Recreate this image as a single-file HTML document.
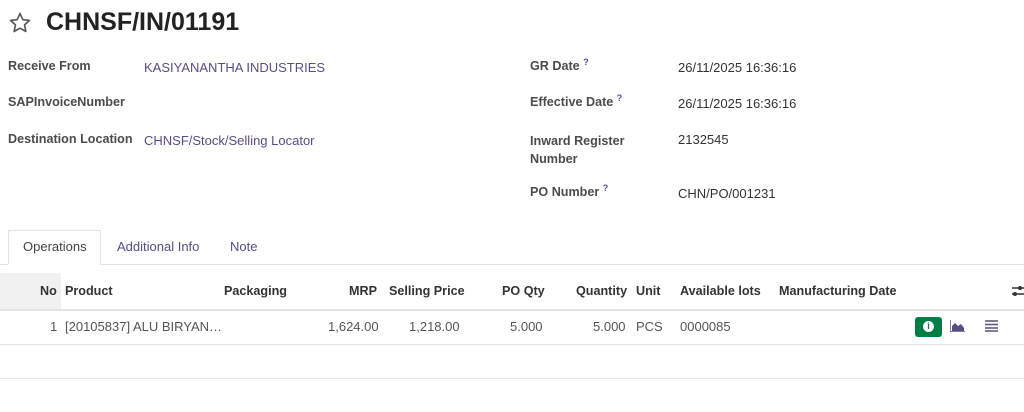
<!DOCTYPE html>
<html><head><style>
body{margin:0;width:1024px;height:412px;background:#fff;font-family:"Liberation Sans",sans-serif;font-size:13px;color:#444;position:relative;overflow:hidden}
.a{position:absolute;white-space:nowrap}
.lbl{font-weight:bold;color:#4c4c4c;font-size:12.6px}
.lnk{color:#5a4d84}
.v{color:#333}
sup{color:#5a4d84;font-size:9px;line-height:0}
.h{font-weight:bold;color:#333;top:284px;font-size:12.6px}
.c{color:#555;top:319px}
</style></head><body>
<svg class="a" style="left:8px;top:11px" width="24" height="24" viewBox="0 0 24 24"><path d="M12 2.5l2.9 6.2 6.6.7-5 4.5 1.4 6.6L12 17.2 6.1 20.5l1.4-6.6-5-4.5 6.6-.7z" fill="none" stroke="#555" stroke-width="1.6" stroke-linejoin="round"/></svg>
<div class="a" style="left:46px;top:8px;font-size:25px;font-weight:bold;color:#222">CHNSF/IN/01191</div>

<div class="a lbl" style="left:8px;top:59px">Receive From</div>
<div class="a lnk" style="left:144px;top:60px">KASIYANANTHA INDUSTRIES</div>
<div class="a lbl" style="left:8px;top:95px">SAPInvoiceNumber</div>
<div class="a lbl" style="left:8px;top:132px">Destination Location</div>
<div class="a lnk" style="left:144px;top:133px">CHNSF/Stock/Selling Locator</div>

<div class="a lbl" style="left:530px;top:59px">GR Date <sup>?</sup></div>
<div class="a v" style="left:678px;top:60px">26/11/2025 16:36:16</div>
<div class="a lbl" style="left:530px;top:95px">Effective Date <sup>?</sup></div>
<div class="a v" style="left:678px;top:96px">26/11/2025 16:36:16</div>
<div class="a lbl" style="left:530px;top:132px;line-height:18px">Inward Register<br>Number</div>
<div class="a v" style="left:678px;top:132px">2132545</div>
<div class="a lbl" style="left:530px;top:185px">PO Number <sup>?</sup></div>
<div class="a v" style="left:678px;top:186px">CHN/PO/001231</div>

<div class="a" style="left:0;top:264px;width:1024px;border-top:1px solid #dee2e6"></div>
<div class="a" style="left:8px;top:230px;width:93px;height:35px;border:1px solid #dee2e6;border-bottom:1px solid #fff;background:#fff;box-sizing:border-box"></div>
<div class="a" style="left:23px;top:239px;color:#444">Operations</div>
<div class="a lnk" style="left:117px;top:239px">Additional Info</div>
<div class="a lnk" style="left:230px;top:239px">Note</div>

<div class="a" style="left:0;top:273px;width:61px;height:36px;background:#f1f1f1"></div>
<div class="a" style="left:0;top:309px;width:1024px;border-top:2px solid #e2e4e7"></div>
<div class="a" style="left:0;top:344px;width:1024px;border-top:1px solid #e2e4e7"></div>
<div class="a" style="left:0;top:378px;width:1024px;border-top:1px solid #e2e4e7"></div>

<div class="a h" style="left:40px">No</div>
<div class="a h" style="left:65px">Product</div>
<div class="a h" style="left:224px">Packaging</div>
<div class="a h" style="left:349px">MRP</div>
<div class="a h" style="left:389px">Selling Price</div>
<div class="a h" style="left:502px">PO Qty</div>
<div class="a h" style="left:576px">Quantity</div>
<div class="a h" style="left:636px">Unit</div>
<div class="a h" style="left:680px">Available lots</div>
<div class="a h" style="left:779px">Manufacturing Date</div>
<svg class="a" style="left:1012px;top:284px" width="12" height="14" viewBox="0 0 12 14"><path d="M0 4h12M0 10h12" stroke="#333" stroke-width="1.5"/><circle cx="8" cy="4" r="2" fill="#333"/><circle cx="3" cy="10" r="2" fill="#333"/></svg>

<div class="a c" style="left:50px">1</div>
<div class="a c" style="left:65px">[20105837] ALU BIRYAN…</div>
<div class="a c" style="left:328px">1,624.00</div>
<div class="a c" style="left:409px">1,218.00</div>
<div class="a c" style="left:510px">5.000</div>
<div class="a c" style="left:593px">5.000</div>
<div class="a c" style="left:636px">PCS</div>
<div class="a c" style="left:680px">0000085</div>
<div class="a" style="left:915px;top:317px;width:27px;height:20px;background:#017e42;border-radius:3px"></div>
<div class="a" style="left:923px;top:321px;width:11px;height:11px;border-radius:50%;background:#fff;color:#017e42;font-size:9px;font-weight:bold;text-align:center;line-height:11px">i</div>
<svg class="a" style="left:950px;top:320px" width="15" height="12" viewBox="0 0 15 12"><path d="M0 0v12h15" stroke="#5a4d84" stroke-width="1.5" fill="none"/><path d="M2 11V6l3-3 3 3 3-2 3 4v3z" fill="#5a4d84"/></svg>
<svg class="a" style="left:985px;top:320px" width="13" height="12" viewBox="0 0 13 12"><path d="M0 1h13M0 4.5h13M0 8h13M0 11h13" stroke="#5a4d84" stroke-width="1.6"/></svg>
</body></html>
